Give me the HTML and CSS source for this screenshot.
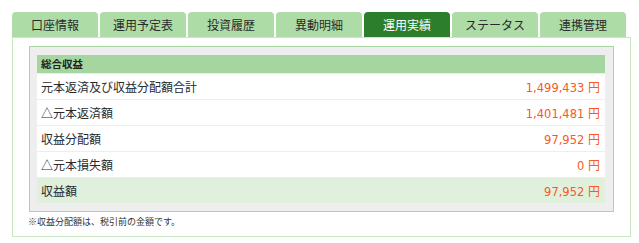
FILE: index.html
```html
<!DOCTYPE html>
<html lang="ja">
<head>
<meta charset="utf-8">
<title>運用実績</title>
<link rel="stylesheet" href="styles.css">
</head>
<body>
<div class="page">
  <nav class="tabs">
    <div class="tab">口座情報</div>
    <div class="tab">運用予定表</div>
    <div class="tab">投資履歴</div>
    <div class="tab">異動明細</div>
    <div class="tab active">運用実績</div>
    <div class="tab">ステータス</div>
    <div class="tab">連携管理</div>
  </nav>
  <section class="panel">
    <div class="box">
      <div class="head">総合収益</div>
      <div class="row"><span class="label">元本返済及び収益分配額合計</span><span class="amt">1,499,433 <span class="yen">円</span></span></div>
      <div class="row"><span class="label">△元本返済額</span><span class="amt">1,401,481 <span class="yen">円</span></span></div>
      <div class="row"><span class="label">収益分配額</span><span class="amt">97,952 <span class="yen">円</span></span></div>
      <div class="row"><span class="label">△元本損失額</span><span class="amt">0 <span class="yen">円</span></span></div>
      <div class="row total"><span class="label">収益額</span><span class="amt">97,952 <span class="yen">円</span></span></div>
    </div>
    <p class="note">※収益分配額は、税引前の金額です。</p>
  </section>
</div>
</body>
</html>
```

FILE: styles.css
```css
* { box-sizing: border-box; }
html, body { margin: 0; padding: 0; background: #fff; }
body {
  font-family: "Noto Sans CJK JP", "Noto Sans", sans-serif;
  color: #333;
}
.page {
  padding: 12px 0 0 12px;
  width: 631px;
}
.tabs {
  display: flex;
  gap: 2px;
  height: 25px;
}
.tab {
  width: 86px;
  height: 25px;
  line-height: 25px;
  text-align: center;
  font-size: 12px;
  background: #aedca6;
  border-radius: 4px 4px 0 0;
  color: #2a2a2a;
}
.tab.active {
  background: #2c7d2c;
  color: #fff;
}
.panel {
  width: 619px;
  border: 1px solid #c8e8c2;
  padding: 8px 16px 8px 16px;
}
.box {
  border: 1px solid #a8d6a0;
  background: #eee;
  padding: 8px 8px 8px 7px;
  display: flex;
  flex-direction: column;
  gap: 1px;
}
.head {
  height: 18px;
  line-height: 18px;
  background: #a6d6a0;
  font-size: 10.5px;
  font-weight: bold;
  padding-left: 4px;
  color: #222;
}
.row {
  height: 25px;
  display: flex;
  align-items: center;
  justify-content: space-between;
  background: #fff;
  padding: 0 5px 0 4px;
  font-size: 12px;
  color: #2a2a2a;
}
.row.total { background: #e0f0dc; }
.amt {
  color: #f75a26;
  font-family: "DejaVu Sans", "Noto Sans CJK JP", sans-serif;
  font-size: 11.5px;
}
.yen {
  font-family: "Noto Sans CJK JP", sans-serif;
  font-size: 12px;
}
.note {
  margin: 4px 0 0 -1px;
  font-size: 9px;
  line-height: 12px;
  color: #333;
}
```
